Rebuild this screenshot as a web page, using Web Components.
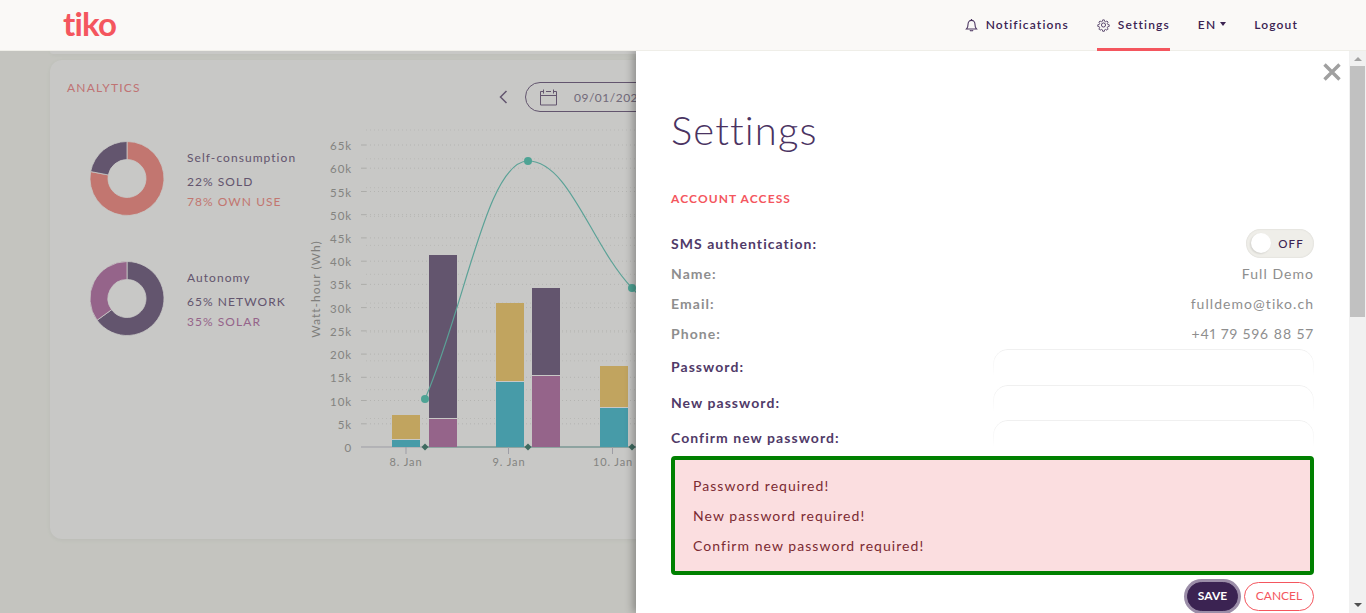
<!DOCTYPE html>
<html lang="en">
<head>
<meta charset="utf-8">
<title>tiko - Settings</title>
<style>
  html, body { margin: 0; padding: 0; height: 613px; overflow: hidden; background: #f5f6ef; font-family: Lato, "Open Sans", sans-serif; }
</style>
</head>
<body>
<app-page>
  <app-navbar slot="nav"></app-navbar>
  <analytics-card slot="main"></analytics-card>
  <settings-drawer slot="drawer">
    <setting-row label="SMS authentication:" strong><toggle-switch></toggle-switch></setting-row>
    <setting-row label="Name:">Full Demo</setting-row>
    <setting-row label="Email:">fulldemo@tiko.ch</setting-row>
    <setting-row label="Phone:">+41 79 596 88 57</setting-row>
    <setting-row label="Password:" strong input></setting-row>
    <setting-row label="New password:" strong input></setting-row>
    <setting-row label="Confirm new password:" strong input></setting-row>
    <alert-box>
      <p>Password required!</p>
      <p>New password required!</p>
      <p>Confirm new password required!</p>
    </alert-box>
  </settings-drawer>
</app-page>

<script>
// page frame : navbar on top, page content, dim layer, drawer
class AppPage extends HTMLElement {
  constructor() {
    super();
    this.attachShadow({ mode: "open" });
    this.shadowRoot.innerHTML = `
      <style>
        :host { display:block; position:relative; height:613px; overflow:hidden; }
        .content { display:flex; flex-direction:column; gap:6px; padding:0 0 0 50px; }
        .prev { height:3px; margin-right:50px; background:#fafaf8; border-radius:0 0 12px 12px; box-shadow:0 1px 4px rgba(0,0,0,.05); }
        .backdrop { position:absolute; inset:51px 0 0 0; background:rgba(0,0,0,.2); }
        .nav { position:relative; z-index:3; }
        .drawer { position:absolute; z-index:2; top:51px; bottom:0; left:636px; right:0; }
      </style>
      <div class="nav"><slot name="nav"></slot></div>
      <div class="content">
        <div class="prev"></div>
        <slot name="main"></slot>
      </div>
      <div class="backdrop"></div>
      <div class="drawer"><slot name="drawer"></slot></div>
    `;
  }
}

class AppNavbar extends HTMLElement {
  constructor() {
    super();
    this.attachShadow({ mode: "open" });
    this.shadowRoot.innerHTML = `
      <style>
        * { box-sizing:border-box; }
        :host { display:block; font-family:Lato, sans-serif; }
        .topbar { display:flex; align-items:stretch; justify-content:space-between; height:51px; padding:0 68px 0 63px; background:#faf9f7; border-bottom:1px solid #efeee8; }
        .logo { display:flex; align-items:center; font-size:33px; font-weight:700; letter-spacing:-.8px; color:#f4565e; line-height:1; padding-bottom:3px; }
        .links { display:flex; align-items:stretch; gap:28px; }
        .item { display:flex; align-items:center; gap:8px; padding-bottom:2px; color:#3b2352; font-size:12px; font-weight:600; letter-spacing:1.150px; position:relative; margin-bottom:-1px; }
        .item svg { display:block; }
        .active::after { content:""; position:absolute; left:0; right:0; bottom:0; height:3px; background:#f4565e; }
        .caret { width:0; height:0; border-left:3.5px solid transparent; border-right:3.5px solid transparent; border-top:4px solid #3b2352; margin:-2px 0 0 -3px; }
      </style>
      <header class="topbar">
        <div class="logo">tiko</div>
        <nav class="links">
          <div class="item">
            <svg width="13" height="14" viewBox="0 0 13 14" fill="none" stroke="#4a3560" stroke-width="1.1"><path d="M1.5 11h10c-1-1-1.5-2-1.5-4.6C10 4 8.6 2.4 6.5 2.4S3 4 3 6.4C3 9 2.5 10 1.5 11z"/><path d="M6.5 1v1.4M5 12.2c.3.8 2.7.8 3 0"/></svg>
            Notifications
          </div>
          <div class="item active">
            <svg width="13" height="14" viewBox="0 0 24 24" fill="none" stroke="#4a3560" stroke-width="1.7"><circle cx="12" cy="12" r="3.8"/><path d="M10.3 1.500h3.400l.6 3 2.200.9 2.600-1.700 2.400 2.400-1.700 2.600.9 2.200 3 .6v3.400l-3 .6-.9 2.200 1.700 2.600-2.400 2.400-2.600-1.700-2.200.9-.6 3h-3.400l-.6-3-2.200-.9-2.600 1.700-2.400-2.400 1.700-2.600-.9-2.200-3-.6v-3.400l3-.6.9-2.200-1.700-2.600 2.400-2.400 2.600 1.700 2.200-.9z" transform="translate(1.200 1.200) scale(.9)"/></svg>
            Settings
          </div>
          <div class="item" style="gap:7px">EN <span class="caret"></span></div>
          <div class="item">Logout</div>
        </nav>
      </header>
    `;
  }
}

class DonutStat extends HTMLElement {
  constructor() {
    super();
    this.attachShadow({ mode: "open" });
  }
  connectedCallback() {
    const pct = +this.getAttribute("value") / 100;
    const startCol = this.getAttribute("first");
    const endCol = this.getAttribute("second");
    // first arc runs clockwise from 12 o'clock
    const pt = (a, r) => [37 + r * Math.sin(a), 37.5 - r * Math.cos(a)];
    const arc = (a0, a1, col) => {
      const R = 37, r = 19, big = a1 - a0 > Math.PI ? 1 : 0;
      const [x0, y0] = pt(a0, R), [x1, y1] = pt(a1, R), [x2, y2] = pt(a1, r), [x3, y3] = pt(a0, r);
      return `<path fill="${col}" stroke="#fafaf8" stroke-width=".8" d="M${x0} ${y0}A${R} ${R} 0 ${big} 1 ${x1} ${y1}L${x2} ${y2}A${r} ${r} 0 ${big} 0 ${x3} ${y3}Z"/>`;
    };
    const mid = pct * Math.PI * 2;
    this.shadowRoot.innerHTML = `
      <style>
        :host { display:flex; align-items:center; gap:22px; font-family:Lato, sans-serif; }
        svg { display:block; flex:none; }
        .text { padding-top:5px; }
        .title { font-size:12px; letter-spacing:1.050px; color:#7c6b8a; margin-bottom:7px; line-height:15px; }
        .line { font-size:12px; letter-spacing:1.050px; line-height:20px; }
      </style>
      <svg width="75" height="75" viewBox="0 0 75 75">${arc(0, mid, startCol)}${arc(mid, Math.PI * 2, endCol)}</svg>
      <div class="text">
        <div class="title">${this.getAttribute("label")}</div>
        <div class="line" style="color:${this.getAttribute("c1")}">${this.getAttribute("t1")}</div>
        <div class="line" style="color:${this.getAttribute("c2")}">${this.getAttribute("t2")}</div>
      </div>
    `;
  }
}

class DatePicker extends HTMLElement {
  constructor() {
    super();
    this.attachShadow({ mode: "open" });
    this.shadowRoot.innerHTML = `
      <style>
        * { box-sizing:border-box; }
        :host { display:flex; align-items:center; gap:17px; font-family:Lato, sans-serif; }
        .pill { display:flex; align-items:center; gap:16px; height:30px; width:240px; padding-left:13px; border:1px solid #7c6b8a; border-radius:15px; font-size:12px; letter-spacing:.5px; color:#8f8599; }
        svg { display:block; flex:none; }
      </style>
      <svg width="9" height="14" viewBox="0 0 9 14" fill="none" stroke="#7c6b8a" stroke-width="1.500"><path d="M7.500 1L1.500 7l6 6"/></svg>
      <div class="pill">
        <svg width="19" height="17" viewBox="0 0 19 17" fill="none" stroke="#7c6b8a" stroke-width="1"><path d="M4 2.500H1.500v13.500h16V2.500H15M7 2.500h5M1.500 6.500h16M4.500 .5v4M14.500 .5v4"/></svg>
        09/01/2021
      </div>
    `;
  }
}

// stacked columns + spline, axis coordinates follow the chart's own 5k = 23.2px scale
class EnergyChart extends HTMLElement {
  constructor() {
    super();
    this.attachShadow({ mode: "open" });
  }
  connectedCallback() {
    const yOf = (v) => 447 - v * 23.23;
    let grid = "", labels = "";
    for (let i = 0; i <= 13; i++) {
      const y = yOf(i).toFixed(1);
      labels += `<text x="352" y="${+y + 5}" text-anchor="end">${i ? i * 5 + "k" : 0}</text>`;
      if (i) {
        grid += `<path d="M361 ${y}h5" stroke="#d8d8d4"/><path d="M366 ${y}H960" stroke="#e2e2de" stroke-dasharray="1 3"/>`;
      }
    }
    for (let y = 130; y < 430; y += 28.85) {
      grid += `<path d="M366 ${y.toFixed(1)}H960" stroke="#e8e8e4" stroke-dasharray="1 3"/>`;
    }
    const bars = [
      [392, 415, 439.500, "#f2ce77", "#59c2d3"],
      [429, 255, 418.500, "#7c6b8a", "#bb7dad"],
      [496, 303, 381.500, "#f2ce77", "#59c2d3"],
      [532, 288, 375.500, "#7c6b8a", "#bb7dad"],
      [600, 366, 407.500, "#f2ce77", "#59c2d3"],
    ].map(([x, top, cut, a, b]) => `
      <rect x="${x}" y="${top}" width="28" height="${cut - top}" fill="${a}"/>
      <rect x="${x}" y="${cut}" width="28" height="${447 - cut}" fill="${b}"/>
      <path d="M${x} ${cut}h28" stroke="#fafaf8"/>`).join("");
    const diamonds = [425, 528, 632].map((x) => `<path d="M${x} 443.500l3.500 3.500-3.500 3.500-3.500-3.500z" fill="#4f8679"/>`).join("");
    const dots = [[425, 399], [528, 161], [632, 288]].map(([x, y]) => `<circle cx="${x}" cy="${y}" r="4" fill="#62ccba"/>`).join("");
    this.shadowRoot.innerHTML = `
      <style>
        :host { display:block; flex:none; font-family:Lato, sans-serif; }
        svg { display:block; }
        text { font-family:Lato, sans-serif; font-size:11.500px; letter-spacing:.9px; fill:#a5a5a1; }
        .x { font-size:11px; }
        .title { font-size:12px; letter-spacing:1px; fill:#a09f9b; }
      </style>
      <svg width="670" height="350" viewBox="300 125 670 350">
        ${grid}
        ${labels}
        <text class="title" transform="translate(320 289) rotate(-90)" text-anchor="middle">Watt-hour (Wh)</text>
        <path d="M361 447H960" stroke="#c5c5cf"/>
        <path d="M425 447H960" stroke="#83b8ad"/>
        <path d="M406 447v7M508.500 447v7M612.500 447v7" stroke="#c5c5cf"/>
        <text class="x" x="406" y="466" text-anchor="middle">8. Jan</text>
        <text class="x" x="509" y="466" text-anchor="middle">9. Jan</text>
        <text class="x" x="613" y="466" text-anchor="middle">10. Jan</text>
        ${bars}
        <path d="M425 399C466 304 487 161 528 161C569 161 591 245 632 288C660 318 690 340 720 350" fill="none" stroke="#72cbbd" stroke-width="1.200"/>
        ${dots}
        ${diamonds}
      </svg>
    `;
  }
}

class AnalyticsCard extends HTMLElement {
  constructor() {
    super();
    this.attachShadow({ mode: "open" });
    this.shadowRoot.innerHTML = `
      <style>
        * { box-sizing:border-box; }
        :host { display:block; height:479px; margin-right:50px; background:#fafaf8; border-radius:12px; box-shadow:0 1px 5px rgba(0,0,0,.05); font-family:Lato, sans-serif; overflow:hidden; }
        .head { display:flex; align-items:flex-start; height:52px; padding:20px 0 0 17px; }
        h2 { margin:0; width:432px; font-size:12px; line-height:15px; font-weight:400; letter-spacing:1.200px; color:#f09090; }
        date-picker { margin-top:2px; }
        .body { display:flex; padding-top:13px; }
        .stats { display:flex; flex-direction:column; gap:45px; width:250px; padding:16px 0 0 40px; }
      </style>
      <div class="head">
        <h2>ANALYTICS</h2>
        <date-picker></date-picker>
      </div>
      <div class="body">
        <div class="stats">
          <donut-stat label="Self-consumption" value="78" first="#f3948c" second="#7c6b8a" t1="22% SOLD" c1="#7c6b8a" t2="78% OWN USE" c2="#f3948c"></donut-stat>
          <donut-stat label="Autonomy" value="65" first="#7c6b8a" second="#bb7dad" t1="65% NETWORK" c1="#7c6b8a" t2="35% SOLAR" c2="#bb7dad"></donut-stat>
        </div>
        <energy-chart></energy-chart>
      </div>
    `;
  }
}

class ToggleSwitch extends HTMLElement {
  constructor() {
    super();
    this.attachShadow({ mode: "open" });
    this.shadowRoot.innerHTML = `
      <style>
        * { box-sizing:border-box; }
        :host { display:block; font-family:Lato, sans-serif; }
        .track { display:flex; align-items:center; justify-content:space-between; width:68px; height:29px; padding:0 10px 0 5px; background:#efeee9; border-radius:15px; box-shadow:inset 0 0 2px rgba(0,0,0,.12); }
        .knob { width:20px; height:20px; border-radius:50%; background:#fff; box-shadow:-1px 1px 2px rgba(0,0,0,.12); }
        .txt { font-size:11.500px; font-weight:500; letter-spacing:1.200px; color:#3b2352; }
      </style>
      <div class="track"><span class="knob"></span><span class="txt">OFF</span></div>
    `;
  }
}

class SettingRow extends HTMLElement {
  constructor() {
    super();
    this.attachShadow({ mode: "open" });
  }
  connectedCallback() {
    const strong = this.hasAttribute("strong");
    const input = this.hasAttribute("input");
    this.shadowRoot.innerHTML = `
      <style>
        * { box-sizing:border-box; }
        :host { display:flex; box-sizing:border-box; align-items:center; justify-content:space-between; height:${input ? "35.500px" : "30px"}; padding-bottom:${input ? 0 : 2}px; font-family:Lato, sans-serif; letter-spacing:1.050px; }
        .label { font-size:14px; font-weight:700; color:${strong ? "#503a68" : "#8e8e8e"}; }
        .value { font-size:14px; color:#8e8e8e; font-variant-numeric:proportional-nums; }
        .field { align-self:flex-start; width:321px; height:34px; border:1px solid #f0f0f0; border-bottom:0; border-radius:15px 15px 0 0; -webkit-mask-image:linear-gradient(#000, transparent 80%); mask-image:linear-gradient(#000, transparent 80%); }
      </style>
      <span class="label">${this.getAttribute("label")}</span>
      ${input ? '<span class="field"></span>' : '<span class="value"><slot></slot></span>'}
    `;
  }
}

class AlertBox extends HTMLElement {
  constructor() {
    super();
    this.attachShadow({ mode: "open" });
    this.shadowRoot.innerHTML = `
      <style>
        * { box-sizing:border-box; }
        :host { display:block; padding:11px 18px 10px; background:#fbdee0; border:4px solid #008000; border-radius:4px; color:#7b2b33; font-family:Lato, sans-serif; font-size:14px; letter-spacing:1.050px; line-height:30px; }
        ::slotted(p) { margin:0; }
      </style>
      <slot></slot>
    `;
  }
}

class PillButton extends HTMLElement {
  constructor() {
    super();
    this.attachShadow({ mode: "open" });
    this.shadowRoot.innerHTML = `
      <style>
        * { box-sizing:border-box; }
        :host { display:block; font-family:Lato, sans-serif; }
        .btn { display:flex; align-items:center; justify-content:center; height:29px; width:70px; padding-bottom:1px; border:1px solid #f4565e; border-radius:15px; color:#f4565e; background:#fff; font-size:12px; }
        :host([primary]) .btn { width:51px; border-color:#3b2352; background:#3b2352; color:#fff; font-weight:700; box-shadow:0 0 0 3px #9b8da8; }
      </style>
      <div class="btn"><slot></slot></div>
    `;
  }
}

class SettingsDrawer extends HTMLElement {
  constructor() {
    super();
    this.attachShadow({ mode: "open" });
    this.shadowRoot.innerHTML = `
      <style>
        * { box-sizing:border-box; }
        :host { display:flex; height:100%; background:#fff; box-shadow:-3px 0 8px rgba(0,0,0,.3); font-family:Lato, sans-serif; overflow:hidden; }
        .pane { flex:1; position:relative; padding:55px 35px 0; min-width:0; }
        h1 { margin:0; font-size:40px; line-height:48px; font-weight:300; letter-spacing:1.100px; color:#4a3362; }
        h3 { margin:37px 0 22px; font-size:12px; line-height:16px; font-weight:700; letter-spacing:1.100px; color:#f4565e; }
        .close { position:absolute; top:12px; right:8px; display:block; }
        .actions { display:flex; justify-content:flex-end; align-items:center; gap:6px; margin-top:7px; }
        .bar { flex:none; width:17px; display:flex; flex-direction:column; align-items:center; background:#f1f1f1; }
        .thumb { width:15px; height:251px; background:#c1c1c1; }
        .up { width:0; height:0; margin:6px 0 5px; border:4px solid transparent; border-top:0; border-bottom:4px solid #a3a3a3; }
        .down { width:0; height:0; margin:auto 0 6px; border:4px solid transparent; border-bottom:0; border-top:4px solid #505050; }
      </style>
      <div class="pane">
        <svg class="close" width="18" height="18" viewBox="0 0 18 18" stroke="#a0a0a0" stroke-width="3.400"><path d="M1.500 1.500l15 15M16.500 1.500l-15 15"/></svg>
        <h1>Settings</h1>
        <h3>ACCOUNT ACCESS</h3>
        <slot></slot>
        <div class="actions">
          <pill-button primary>SAVE</pill-button>
          <pill-button>CANCEL</pill-button>
        </div>
      </div>
      <div class="bar"><span class="up"></span><span class="thumb"></span><span class="down"></span></div>
    `;
  }
}

customElements.define("app-page", AppPage);
customElements.define("app-navbar", AppNavbar);
customElements.define("donut-stat", DonutStat);
customElements.define("date-picker", DatePicker);
customElements.define("energy-chart", EnergyChart);
customElements.define("analytics-card", AnalyticsCard);
customElements.define("toggle-switch", ToggleSwitch);
customElements.define("setting-row", SettingRow);
customElements.define("alert-box", AlertBox);
customElements.define("pill-button", PillButton);
customElements.define("settings-drawer", SettingsDrawer);
</script>
</body>
</html>
